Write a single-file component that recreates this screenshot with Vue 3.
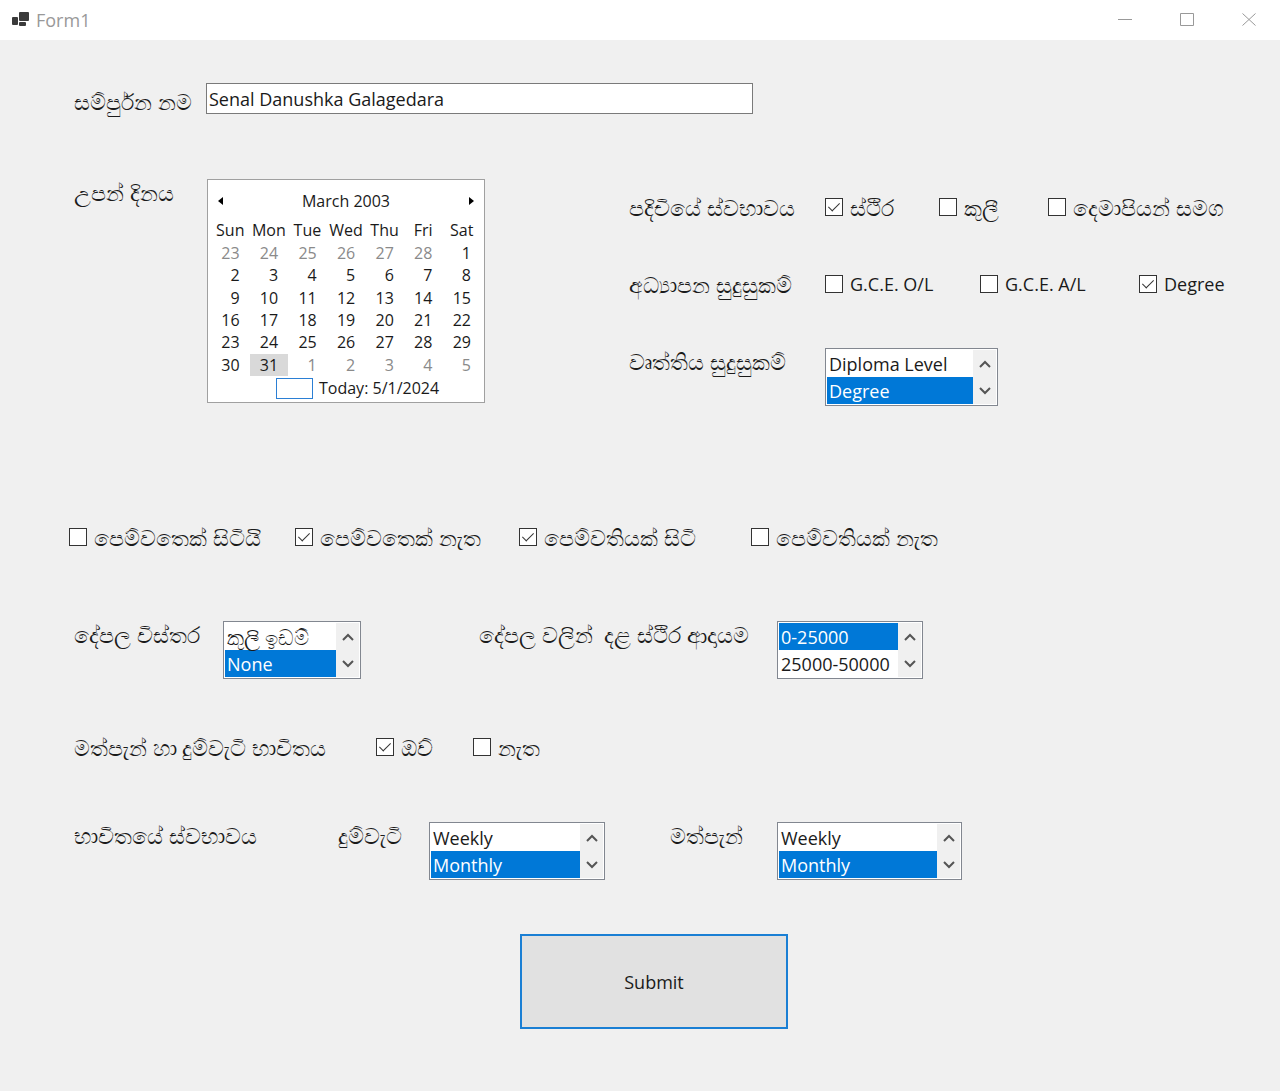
<script setup>
import { ref } from 'vue'

const fullName = ref('Senal Danushka Galagedara')
const residence = ref(['ස්ථිර'])
const education = ref(['Degree'])
const partner = ref(['පෙම්වතෙක් නැත', 'පෙම්වතියක් සිටි'])
const substance = ref(['ඔව්'])

const residenceOptions = ['ස්ථිර', 'කුලී', 'දෙමාපියන් සමග']
const educationOptions = ['G.C.E. O/L', 'G.C.E. A/L', 'Degree']
const partnerOptions = ['පෙම්වතෙක් සිටියි', 'පෙම්වතෙක් නැත', 'පෙම්වතියක් සිටි', 'පෙම්වතියක් නැත']
const substanceOptions = ['ඔව්', 'නැත']

const professional = ref(['Degree'])
const property = ref(['None'])
const income = ref(['0-25000'])
const smoking = ref(['Monthly'])
const alcohol = ref(['Monthly'])

const weekdays = ['Sun', 'Mon', 'Tue', 'Wed', 'Thu', 'Fri', 'Sat']
const selectedDay = ref(31)

// March 2003 starts on a Saturday; the grid opens on 23 February.
const weeks = Array.from({ length: 6 }, (_, w) =>
  Array.from({ length: 7 }, (_, d) => {
    const offset = w * 7 + d - 5
    if (offset < 1) return { day: offset + 28, other: true }
    if (offset > 31) return { day: offset - 31, other: true }
    return { day: offset, other: false }
  })
)

function pick(cell) {
  if (!cell.other) selectedDay.value = cell.day
}

function scrollList(event, rows) {
  const list = event.currentTarget.closest('.listbox').querySelector('select')
  list.scrollTop += rows * 27
}
</script>

<template>
  <div class="window">
    <header class="titlebar">
      <svg class="app-icon" width="18" height="16" viewBox="0 0 18 16" aria-hidden="true">
        <rect x="7" y="0" width="10" height="9" rx="1" />
        <rect x="0" y="5" width="6" height="8" rx="1" />
        <rect x="7" y="10" width="7" height="4" rx="1" />
      </svg>
      <span class="title">Form1</span>
      <button type="button" class="caption" aria-label="Minimize">
        <svg width="14" height="14" viewBox="0 0 14 14"><path d="M0 6.5H14" /></svg>
      </button>
      <button type="button" class="caption" aria-label="Maximize">
        <svg width="14" height="14" viewBox="0 0 14 14"><path d="M.5 .5H13.5V12.5H.5Z" /></svg>
      </button>
      <button type="button" class="caption" aria-label="Close">
        <svg width="14" height="14" viewBox="0 0 14 14"><path d="M.5 .5L13.5 12.5M13.5 .5L.5 12.5" /></svg>
      </button>
    </header>

    <form class="form" @submit.prevent>
      <div class="row name-row">
        <label class="label name-label si" for="full-name">සම්පුර්&zwnj;න නම</label>
        <input id="full-name" v-model="fullName" class="textbox" type="text" />
      </div>

      <div class="row details-row">
        <span id="dob-label" class="label si">උපන් දිනය</span>
        <div class="calendar" role="group" aria-labelledby="dob-label">
          <div class="cal-head">
            <button type="button" aria-label="Previous month">
              <svg width="5" height="8" viewBox="0 0 5 8"><path d="M5 0V8L0 4Z" /></svg>
            </button>
            <span>March 2003</span>
            <button type="button" aria-label="Next month">
              <svg width="5" height="8" viewBox="0 0 5 8"><path d="M0 0V8L5 4Z" /></svg>
            </button>
          </div>
          <table class="cal-grid">
            <thead>
              <tr>
                <th v-for="d in weekdays" :key="d" scope="col">{{ d }}</th>
              </tr>
            </thead>
            <tbody>
              <tr v-for="(week, w) in weeks" :key="w">
                <td
                  v-for="(cell, d) in week"
                  :key="d"
                  :class="{ other: cell.other, selected: !cell.other && cell.day === selectedDay }"
                  @click="pick(cell)"
                >{{ cell.day }}</td>
              </tr>
            </tbody>
          </table>
          <div class="cal-today"><i class="today-box"></i><span>Today: 5/1/2024</span></div>
        </div>

        <div class="side">
          <div class="row side-row">
            <span id="residence-label" class="si">පදිචියේ ස්වභාවය</span>
            <div class="row residence" role="group" aria-labelledby="residence-label">
              <label v-for="o in residenceOptions" :key="o" class="check si">
                <input v-model="residence" type="checkbox" :value="o" />{{ o }}
              </label>
            </div>
          </div>
          <div class="row side-row">
            <span id="education-label" class="si">අධ්‍යාපන සුදුසුකම්</span>
            <div class="row education" role="group" aria-labelledby="education-label">
              <label v-for="o in educationOptions" :key="o" class="check">
                <input v-model="education" type="checkbox" :value="o" />{{ o }}
              </label>
            </div>
          </div>
          <div class="row side-row">
            <label class="si" for="professional">වෘත්තිය සුදුසුකම්</label>
            <div class="listbox professional">
              <select id="professional" v-model="professional" multiple size="2">
                <option>Diploma Level</option>
                <option>Degree</option>
              </select>
              <div class="scroll">
                <button type="button" aria-label="Up" @click="scrollList($event, -1)">
                  <svg width="12" height="8" viewBox="0 0 12 8"><path d="M1 7L6 2L11 7" /></svg>
                </button>
                <button type="button" aria-label="Down" @click="scrollList($event, 1)">
                  <svg width="12" height="8" viewBox="0 0 12 8"><path d="M1 1L6 6L11 1" /></svg>
                </button>
              </div>
            </div>
          </div>
        </div>
      </div>

      <div class="row partner-row">
        <label v-for="o in partnerOptions" :key="o" class="check si">
          <input v-model="partner" type="checkbox" :value="o" />{{ o }}
        </label>
      </div>

      <div class="row property-row">
        <label class="label si" for="property">දේපල විස්තර</label>
        <div class="listbox property">
          <select id="property" v-model="property" multiple size="2">
            <option class="si">කුලි ඉඩම්</option>
            <option>None</option>
          </select>
          <div class="scroll">
            <button type="button" aria-label="Up" @click="scrollList($event, -1)">
              <svg width="12" height="8" viewBox="0 0 12 8"><path d="M1 7L6 2L11 7" /></svg>
            </button>
            <button type="button" aria-label="Down" @click="scrollList($event, 1)">
              <svg width="12" height="8" viewBox="0 0 12 8"><path d="M1 1L6 6L11 1" /></svg>
            </button>
          </div>
        </div>
        <label class="label si" for="income">දේපල වලින්&nbsp; දළ ස්ථිර ආදායම</label>
        <div class="listbox income">
          <select id="income" v-model="income" multiple size="2">
            <option>0-25000</option>
            <option>25000-50000</option>
          </select>
          <div class="scroll">
            <button type="button" aria-label="Up" @click="scrollList($event, -1)">
              <svg width="12" height="8" viewBox="0 0 12 8"><path d="M1 7L6 2L11 7" /></svg>
            </button>
            <button type="button" aria-label="Down" @click="scrollList($event, 1)">
              <svg width="12" height="8" viewBox="0 0 12 8"><path d="M1 1L6 6L11 1" /></svg>
            </button>
          </div>
        </div>
      </div>

      <div class="row substance-row" role="group" aria-labelledby="substance-label">
        <span id="substance-label" class="label si">මත්පැන් හා දුම්වැටි භාවිතය</span>
        <label v-for="o in substanceOptions" :key="o" class="check si">
          <input v-model="substance" type="checkbox" :value="o" />{{ o }}
        </label>
      </div>

      <div class="row usage-row">
        <span class="label si">භාවිතයේ ස්වභාවය</span>
        <label class="label si" for="smoking">දුම්වැටි</label>
        <div class="listbox smoking">
          <select id="smoking" v-model="smoking" multiple size="2">
            <option>Weekly</option>
            <option>Monthly</option>
          </select>
          <div class="scroll">
            <button type="button" aria-label="Up" @click="scrollList($event, -1)">
              <svg width="12" height="8" viewBox="0 0 12 8"><path d="M1 7L6 2L11 7" /></svg>
            </button>
            <button type="button" aria-label="Down" @click="scrollList($event, 1)">
              <svg width="12" height="8" viewBox="0 0 12 8"><path d="M1 1L6 6L11 1" /></svg>
            </button>
          </div>
        </div>
        <label class="label si" for="alcohol">මත්පැන්</label>
        <div class="listbox alcohol">
          <select id="alcohol" v-model="alcohol" multiple size="2">
            <option>Weekly</option>
            <option>Monthly</option>
          </select>
          <div class="scroll">
            <button type="button" aria-label="Up" @click="scrollList($event, -1)">
              <svg width="12" height="8" viewBox="0 0 12 8"><path d="M1 7L6 2L11 7" /></svg>
            </button>
            <button type="button" aria-label="Down" @click="scrollList($event, 1)">
              <svg width="12" height="8" viewBox="0 0 12 8"><path d="M1 1L6 6L11 1" /></svg>
            </button>
          </div>
        </div>
      </div>

      <div class="row submit-row">
        <button type="submit" class="submit">Submit</button>
      </div>
    </form>
  </div>
</template>

<style>
body {
  margin: 0;
  background: #f0f0f0;
}
</style>

<style scoped>
.window {
  min-height: 100vh;
  background: #f0f0f0;
  color: #1a1a1a;
  font-family: 'Segoe UI', 'Open Sans', 'Noto Sans', sans-serif;
  font-size: 18px;
  line-height: 26px;
  white-space: nowrap;
}

button,
input,
select {
  font: inherit;
  color: inherit;
  box-sizing: border-box;
  margin: 0;
}

button {
  padding: 0;
  border: 0;
  background: none;
}

svg {
  display: block;
}

/* Sinhala glyphs run small beside the Latin face */
.si {
  font-size: 22px;
}

.titlebar {
  display: flex;
  align-items: center;
  height: 40px;
  padding-left: 12px;
  background: #fff;
}

.app-icon {
  fill: #3a3a3a;
}

.title {
  flex: 1;
  padding-left: 6px;
  color: #999;
}

.caption {
  display: grid;
  place-items: center;
  width: 62px;
  height: 40px;
}

.caption svg {
  fill: none;
  stroke: #999;
}

.form {
  padding: 43px 56px 62px 69px;
}

.row {
  display: grid;
  align-items: start;
}

.row > * {
  min-width: 0;
}

.label {
  padding-left: 5px;
}

.name-row {
  grid-template-columns: 137fr 547fr 471fr;
}

.name-label {
  padding-top: 5px;
}

.textbox {
  height: 31px;
  padding: 0 2px;
  border: 1px solid #7a7a7a;
  background: #fff;
  outline: none;
}

.details-row {
  grid-template-columns: 138fr 422fr 595fr;
  margin-top: 65px;
}

.calendar {
  box-sizing: border-box;
  width: 278px;
  padding: 4px 3px 2px;
  border: 1px solid #a0a0a0;
  background: #fff;
  font-size: 16px;
  line-height: 22px;
}

.cal-head {
  display: flex;
  align-items: center;
  justify-content: space-between;
  height: 34px;
}

.cal-head button {
  display: grid;
  place-items: center;
  width: 18px;
  height: 26px;
}

.cal-grid {
  width: 100%;
  height: 158px;
  table-layout: fixed;
  border-collapse: collapse;
}

.cal-grid th {
  height: 24px;
  padding: 0;
  font-weight: 400;
  text-align: center;
}

.cal-grid td {
  padding: 0 10px 0 0;
  line-height: 20px;
  text-align: right;
}

.cal-grid .other {
  color: #8a8a8a;
}

.cal-grid .selected {
  background: #d9d9d9;
}

.cal-today {
  display: flex;
  align-items: center;
  height: 24px;
  padding-left: 65px;
  gap: 6px;
}

.today-box {
  box-sizing: border-box;
  width: 37px;
  height: 21px;
  border: 1px solid #2b7fd4;
}

.side {
  display: grid;
  gap: 51px;
  padding-top: 15px;
}

.side-row {
  grid-template-columns: 196fr 399fr;
}

.residence {
  grid-template-columns: 114fr 109fr 176fr;
}

.education {
  grid-template-columns: 155fr 159fr 85fr;
}

.check {
  display: flex;
  align-items: center;
  gap: 7px;
}

.check input {
  appearance: none;
  display: grid;
  place-items: center;
  flex: none;
  width: 18px;
  height: 18px;
  border: 1px solid #333;
  background: #fff;
}

.check input:checked::after {
  content: '';
  width: 5px;
  height: 10px;
  margin-bottom: 4px;
  border: solid #333;
  border-width: 0 1px 1px 0;
  transform: rotate(45deg);
}

.listbox {
  box-sizing: border-box;
  display: flex;
  height: 58px;
  padding: 1px;
  border: 1px solid #828790;
  background: #fff;
}

.listbox select {
  flex: 1;
  min-width: 0;
  height: 54px;
  padding: 0;
  border: 0;
  border-radius: 0;
  outline: none;
  background: #fff;
  overflow-x: hidden;
  scrollbar-width: none;
}

.listbox option {
  height: 27px;
  min-height: 27px;
  box-sizing: border-box;
  padding: 2px 2px 0;
  line-height: 25px;
}

.listbox option.si {
  padding-top: 0;
  font-size: 21px;
  line-height: 22px;
}

.listbox option:checked {
  background: #0078d7 linear-gradient(#0078d7, #0078d7);
  color: #fff;
  -webkit-text-fill-color: #fff;
}

.scroll {
  display: grid;
  width: 23px;
  background: #f0f0f0;
}

.scroll button {
  display: grid;
  place-items: center;
}

.scroll svg {
  fill: none;
  stroke: #555;
  stroke-width: 2;
}

.professional {
  width: 173px;
}

.property {
  width: 138px;
}

.income {
  width: 146px;
}

.smoking {
  width: 176px;
}

.alcohol {
  width: 185px;
}

.partner-row {
  grid-template-columns: 226fr 224fr 232fr 473fr;
  margin-top: 118px;
}

.property-row {
  grid-template-columns: 154fr 251fr 303fr 447fr;
  margin-top: 71px;
}

.substance-row {
  grid-template-columns: 307fr 97fr 751fr;
  margin-top: 55px;
}

.usage-row {
  grid-template-columns: 264fr 96fr 236fr 112fr 447fr;
  margin-top: 62px;
}

.submit-row {
  grid-template-columns: 451fr 704fr;
  margin-top: 54px;
}

.submit {
  grid-column: 2;
  width: 268px;
  height: 95px;
  border: 2px solid #1a7fd4;
  background: #e1e1e1;
}
</style>
